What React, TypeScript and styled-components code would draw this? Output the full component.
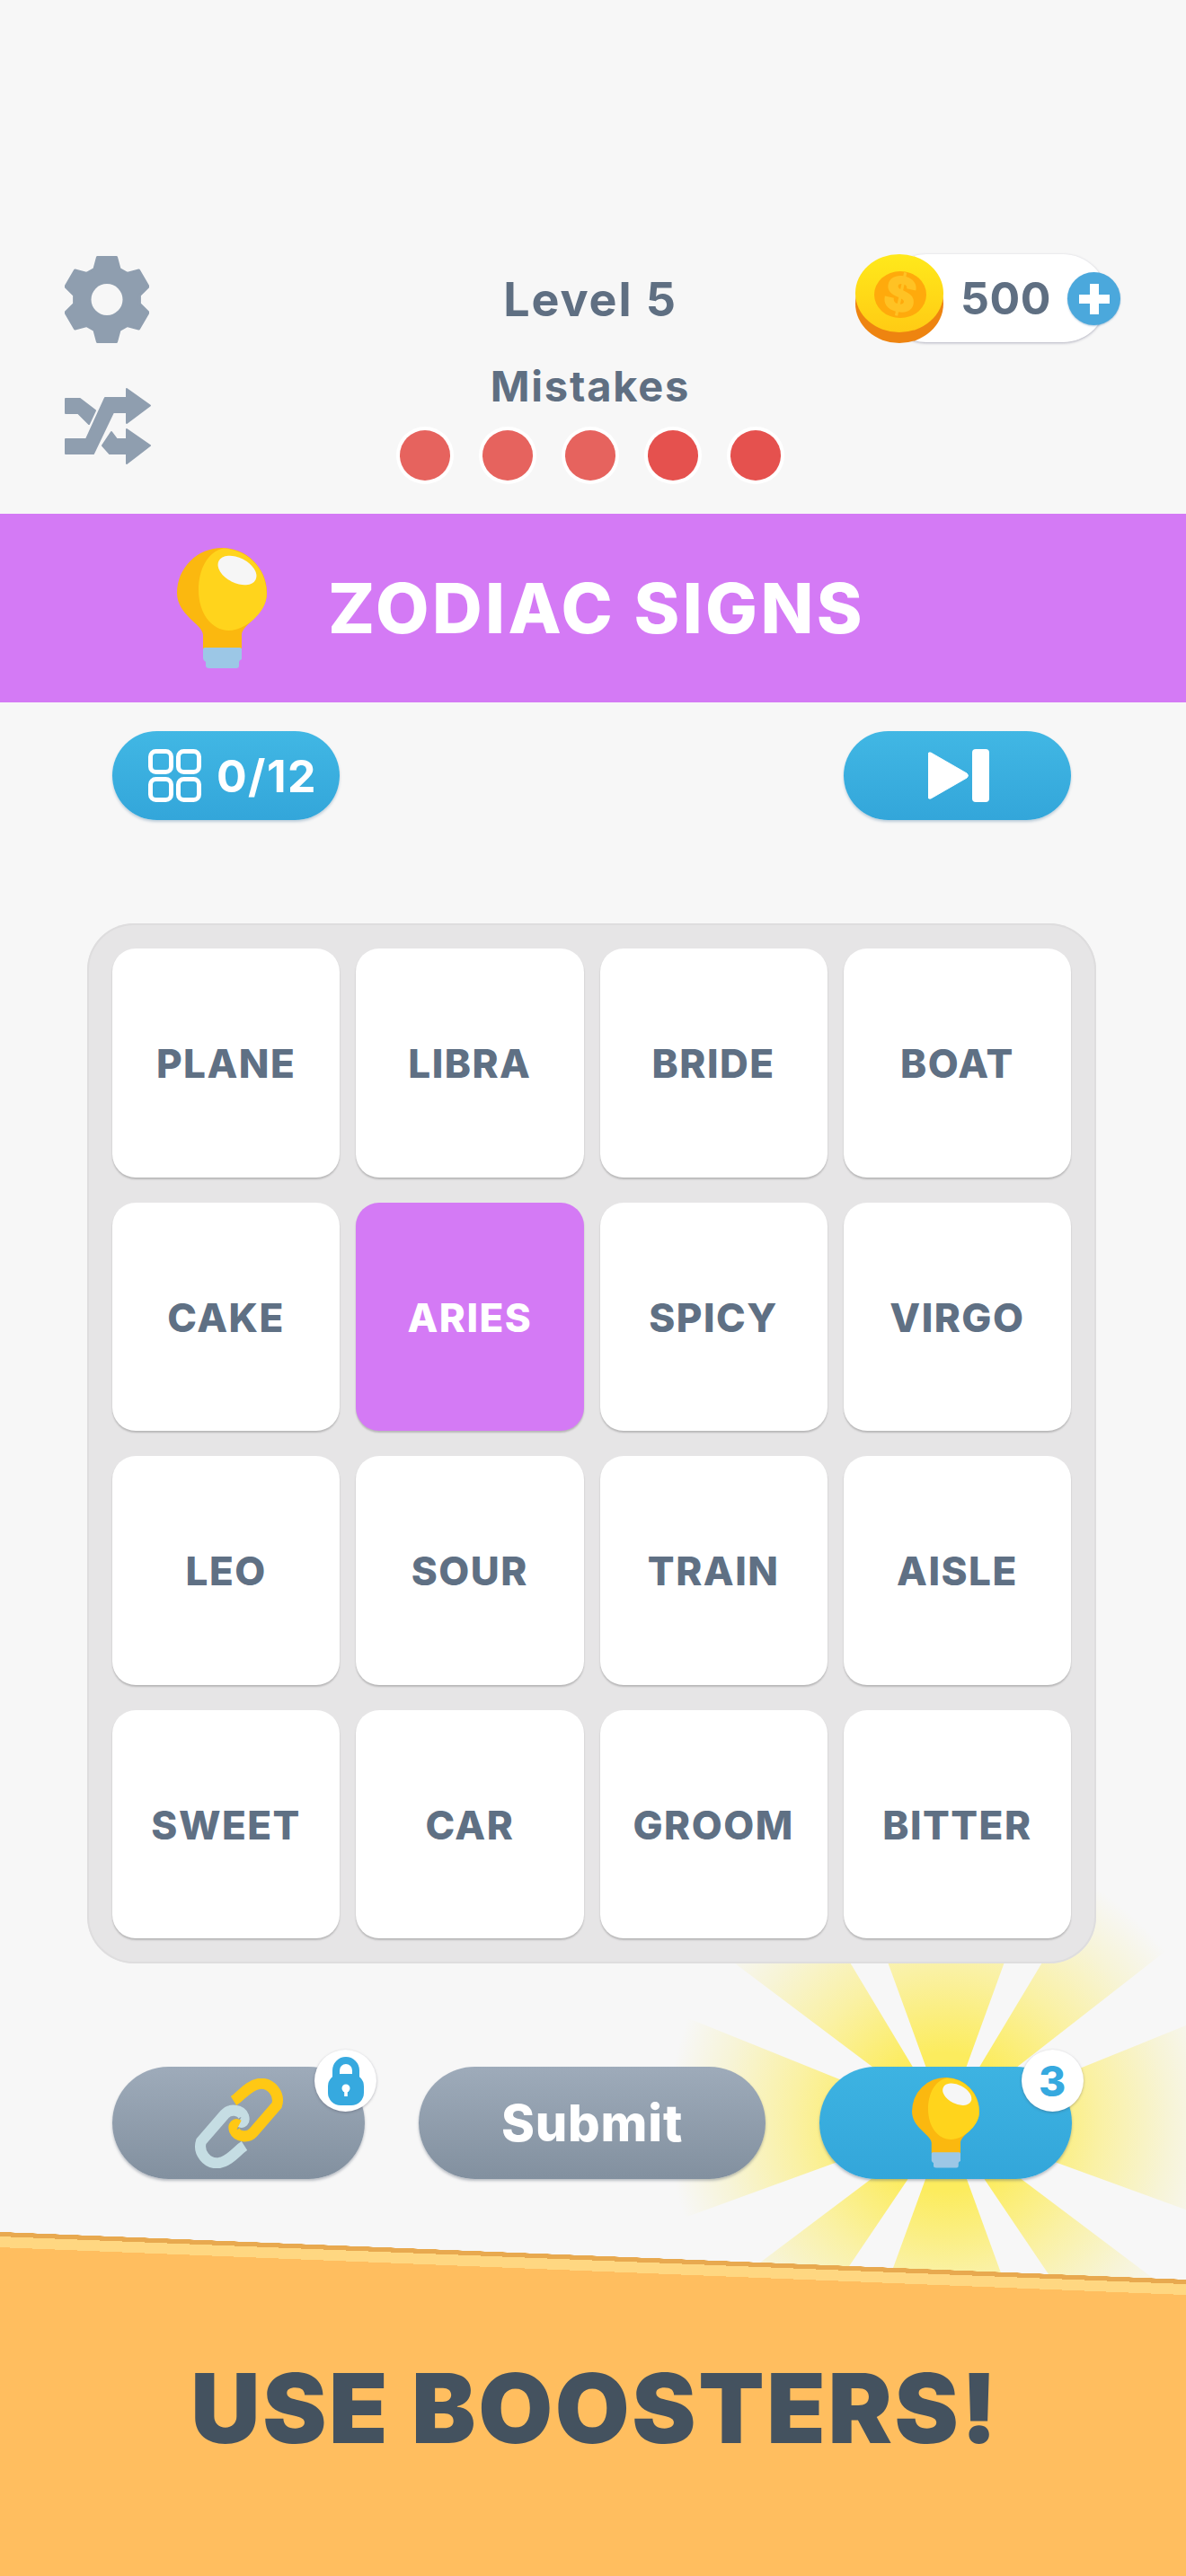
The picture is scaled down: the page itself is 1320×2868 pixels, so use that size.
import React from 'react';
import styled, { createGlobalStyle } from 'styled-components';

const GlobalStyle = createGlobalStyle`
  html, body {
    margin: 0;
    padding: 0;
    background: #F7F7F7;
  }
`;

const Page = styled.div`
  position: relative;
  width: 1320px;
  height: 2868px;
  overflow: hidden;
  background: #F7F7F7;
  font-family: Inter, "Noto Sans", sans-serif;
`;

const Header = styled.header`
  display: grid;
  grid-template-columns: 300px 570px auto;
  height: 572px;
  box-sizing: border-box;
  padding: 283px 0 0 72px;
`;

const ToolColumn = styled.div`
  display: flex;
  flex-direction: column;
  gap: 50px;
  padding-top: 2px;
`;

const StatusColumn = styled.div`
  display: flex;
  flex-direction: column;
  align-items: center;
`;

const LevelText = styled.div`
  margin-top: 19px;
  font-size: 52px;
  line-height: 64px;
  font-weight: 700;
  letter-spacing: 1.9px;
  color: #5F6F82;
`;

const MistakesText = styled.div`
  margin-top: 36px;
  font-size: 47px;
  line-height: 56px;
  font-weight: 700;
  letter-spacing: 1.8px;
  color: #5F6F82;
`;

const Dots = styled.div`
  display: flex;
  gap: 36px;
  margin-top: 21px;
`;

const Dot = styled.div<{ $strong?: boolean }>`
  width: 56px;
  height: 56px;
  border-radius: 50%;
  background: ${(p) => (p.$strong ? '#E5514E' : '#E6635E')};
  box-shadow: 0 0 0 4px #FFFFFF;
`;

const CoinBox = styled.div`
  position: relative;
  margin-left: 10px;
  width: 295px;
  height: 99px;
`;

const CoinPill = styled.div`
  display: flex;
  align-items: center;
  height: 98px;
  margin-left: 30px;
  width: 250px;
  box-sizing: border-box;
  padding-left: 87px;
  border-radius: 49px;
  background: #FFFFFF;
  box-shadow: 0 1px 3px rgba(90, 90, 120, 0.45);
  font-size: 50px;
  font-weight: 700;
  letter-spacing: 0.6px;
  color: #5F6F82;
`;

const CoinIcon = styled.svg`
  position: absolute;
  left: 0;
  top: 0;
`;

const PlusButton = styled.div`
  position: absolute;
  left: 236px;
  top: 20px;
  width: 59px;
  height: 59px;
  border-radius: 50%;
  background: #4BA8DC;
  display: flex;
  align-items: center;
  justify-content: center;
  box-shadow: 0 1px 2px rgba(60, 120, 170, 0.4);
`;

const Banner = styled.section`
  display: flex;
  align-items: center;
  gap: 68px;
  height: 210px;
  box-sizing: border-box;
  padding-left: 197px;
  background: #D47AF5;
`;

const BannerTitle = styled.h1`
  margin: 0;
  font-size: 77px;
  font-weight: 800;
  letter-spacing: 3.4px;
  color: #FFFFFF;
`;

const PillRow = styled.div`
  display: flex;
  justify-content: space-between;
  padding: 32px 128px 0 125px;
`;

const BluePill = styled.div<{ $shift?: number }>`
  display: flex;
  align-items: center;
  justify-content: center;
  gap: 17px;
  width: 253px;
  height: 99px;
  box-sizing: border-box;
  padding-left: ${(p) => p.$shift ?? 0}px;
  border-radius: 50px;
  background: linear-gradient(#41B7E4, #33A6DA);
  box-shadow: 0 2px 3px rgba(60, 110, 150, 0.3);
`;

const CounterText = styled.span`
  font-size: 50px;
  font-weight: 700;
  letter-spacing: 1.5px;
  color: #FFFFFF;
`;

const Board = styled.main`
  position: relative;
  z-index: 2;
  display: grid;
  grid-template-columns: repeat(4, 1fr);
  grid-template-rows: repeat(4, 1fr);
  column-gap: 18px;
  row-gap: 28px;
  width: 1123px;
  height: 1158px;
  box-sizing: border-box;
  margin: 115px 0 0 97px;
  padding: 28px;
  border-radius: 52px;
  background: #E6E5E6;
  box-shadow: inset 0 0 0 2px #DEDDDE;
`;

const Tile = styled.div<{ $selected?: boolean }>`
  display: flex;
  align-items: center;
  justify-content: center;
  box-sizing: border-box;
  padding-top: 2px;
  border-radius: 26px;
  background: ${(p) => (p.$selected ? '#D47AF5' : '#FFFFFF')};
  box-shadow: 0 2px 2px rgba(0, 0, 0, 0.2);
  font-size: 44px;
  font-weight: 800;
  letter-spacing: 1.5px;
  color: ${(p) => (p.$selected ? '#FFFFFF' : '#5F7084')};
`;

const ActionRow = styled.div`
  position: relative;
  display: flex;
  gap: 60px;
  margin-top: 115px;
  padding-left: 125px;
`;

const ActionButton = styled.button<{ $width: number; $blue?: boolean }>`
  position: relative;
  z-index: 1;
  display: flex;
  align-items: center;
  justify-content: center;
  width: ${(p) => p.$width}px;
  height: 125px;
  padding: 0;
  border: none;
  border-radius: 63px;
  background: ${(p) => (p.$blue ? 'linear-gradient(#3DB3E2, #33A6DA)' : 'linear-gradient(#9EABBA, #82909F)')};
  box-shadow: 0 2px 3px rgba(70, 80, 100, 0.35);
  font-family: Inter, sans-serif;
  font-size: 56px;
  font-weight: 800;
  letter-spacing: 0.8px;
  color: #FFFFFF;
`;

const CornerBadge = styled.div`
  position: absolute;
  right: -13px;
  top: -19px;
  width: 69px;
  height: 69px;
  border-radius: 50%;
  background: #FFFFFF;
  box-shadow: 0 1px 3px rgba(60, 60, 80, 0.35);
  display: flex;
  align-items: center;
  justify-content: center;
  font-family: Inter, sans-serif;
  font-size: 46px;
  font-weight: 800;
  color: #36A9DF;
`;

const RaysArt = styled.svg`
  position: absolute;
  left: 713px;
  top: -278px;
  z-index: 0;
`;

const Footer = styled.footer`
  position: relative;
  z-index: 2;
  height: 383px;
  margin-top: 59px;
  box-sizing: border-box;
  padding: 131px 0 0 5px;
  text-align: center;
  background: linear-gradient(
    182.3deg,
    transparent 52.8px,
    #E8A94F 53px,
    #E8A94F 58px,
    #FFD781 58px,
    #FFD781 70px,
    #FFBE5F 70px
  );
`;

const FooterTitle = styled.h2`
  margin: 0;
  font-size: 107px;
  line-height: 130px;
  font-weight: 900;
  letter-spacing: 2.6px;
  color: #44525F;
`;

const Bulb = ({ width }: { width: number }) => (
  <svg width={width} height={(width * 134) / 100} viewBox="0 0 100 134">
    <path d="M29 97C29 85 0 75 0 50A50 50 0 0 1 100 50C100 75 72 85 72 97V112H29Z" fill="#FBB80F" />
    <path d="M52 .5C34 4 24 24 24 47C24 72 38 92 58 92C76 92 98 72 99.5 55A50 50 0 0 0 52 .5Z" fill="#FFD41C" />
    <ellipse cx="67" cy="25" rx="23" ry="14" transform="rotate(27 67 25)" fill="#F6F6F6" />
    <path d="M31 111H70Q72 111 72 113V124Q69 125 69 127V131Q69 134 66 134H36Q32 134 32 131V127Q29 125 29 123V113Q29 111 31 111Z" fill="#9CC7E6" />
  </svg>
);

// six teeth, small round join on the corners
const gearPath = () => {
  const pts: string[] = [];
  for (let k = 0; k < 6; k++) {
    const a = (k * Math.PI) / 3;
    const at = (r: number, w: number) =>
      `${(47 + r * Math.sin(a) + w * Math.cos(a)).toFixed(1)} ${(48.5 - r * Math.cos(a) + w * Math.sin(a)).toFixed(1)}`;
    pts.push(at(34, -14), at(47, -10.5), at(47, 10.5), at(34, 14));
  }
  return `M${pts.join('L')}Z`;
};

const GearIcon = () => (
  <svg width="94" height="97" viewBox="0 0 94 97">
    <path d={gearPath()} fill="#8F9EAF" stroke="#8F9EAF" strokeWidth="3" strokeLinejoin="round" />
    <circle cx="47" cy="48.5" r="17.5" fill="#F7F7F7" />
  </svg>
);

const ShuffleIcon = () => (
  <svg width="97" height="85" viewBox="0 0 97 85">
    <g fill="#8F9EAF" stroke="#8F9EAF" strokeWidth="2" strokeLinejoin="round">
      <path d="M1 57H24L45 11H69V1L95 19.5L69 39V27H54L32 73H1Z" />
      <path d="M1 12H17L34 25L27 40L15 28H1Z" />
      <path d="M42 64L52 49L58 57H69V46L95 64L69 84V73H50Z" />
    </g>
  </svg>
);

const Coin = () => (
  <CoinIcon width="98" height="99" viewBox="0 0 98 99">
    <defs>
      <linearGradient id="coinFace" x1="0" y1="0" x2="0" y2="1">
        <stop offset="0" stopColor="#FFE91B" />
        <stop offset="1" stopColor="#FFCB14" />
      </linearGradient>
    </defs>
    <ellipse cx="49" cy="55" rx="49" ry="44" fill="#EE8410" />
    <ellipse cx="49" cy="43.5" rx="49" ry="43.5" fill="url(#coinFace)" />
    <ellipse cx="50" cy="45" rx="29" ry="26" fill="#FFAA0C" />
    <text x="50" y="64" textAnchor="middle" fontFamily="Inter, sans-serif" fontWeight="900" fontSize="54" fill="#FFC224" transform="rotate(12 50 45)">$</text>
  </CoinIcon>
);

const PlusIcon = () => (
  <svg width="34" height="34" viewBox="0 0 34 34">
    <path d="M12 0H22V12H34V22H22V34H12V22H0V12H12Z" fill="#FFFFFF" />
  </svg>
);

const GridIcon = () => (
  <svg width="59" height="59" viewBox="0 0 59 59" fill="none" stroke="#FFFFFF" strokeWidth="5">
    <rect x="2.5" y="2.5" width="23" height="23" rx="6" />
    <rect x="33.5" y="2.5" width="23" height="23" rx="6" />
    <rect x="2.5" y="33.5" width="23" height="23" rx="6" />
    <rect x="33.5" y="33.5" width="23" height="23" rx="6" />
  </svg>
);

const SkipIcon = () => (
  <svg width="68" height="59" viewBox="0 0 68 59">
    <path d="M3 4L43 27Q46 29.5 43 32L3 55Q0 56 0 53V6Q0 3 3 4Z" fill="#FFFFFF" stroke="#FFFFFF" strokeWidth="1" />
    <rect x="49" y="0" width="19" height="59" rx="4" fill="#FFFFFF" />
  </svg>
);

const LinkIcon = () => (
  <svg width="100" height="100" viewBox="0 0 100 100" fill="none" strokeWidth="12" strokeLinecap="butt">
    <path d="M56 75C48 80 40 92 28 94C14 96 4 82 8 70L34 40C40 33 52 35 55 42C57 48 54 50 50 48" stroke="#C5DDE3" />
    <path d="M44 25C52 20 60 8 72 6C86 4 96 18 92 30L66 60C60 67 48 65 45 58C43 52 46 50 50 52" stroke="#FFC814" />
  </svg>
);

const LockIcon = () => (
  <svg width="40" height="54" viewBox="0 0 40 54">
    <path d="M9 26V15A11 11 0 0 1 31 15V26" fill="none" stroke="#36A9DF" strokeWidth="8" />
    <rect x="0" y="19" width="40" height="35" rx="14" fill="#36A9DF" />
    <circle cx="20" cy="35" r="4.5" fill="#FFFFFF" />
    <rect x="18.2" y="35" width="3.6" height="9" fill="#FFFFFF" />
  </svg>
);

// degrees clockwise from straight up, both edges of each ray
const rayAngles: [number, number][] = [
  [-20, 20], [31, 52], [68, 110], [127, 146], [160, 200], [214, 233], [250, 292], [307, 329],
];

const rayPoint = (deg: number) => {
  const r = (deg * Math.PI) / 180;
  return `${(340 + 340 * Math.sin(r)).toFixed(1)} ${(340 - 340 * Math.cos(r)).toFixed(1)}`;
};

const Rays = () => (
  <RaysArt width="680" height="680" viewBox="0 0 680 680">
    <defs>
      <radialGradient id="rayFade" gradientUnits="userSpaceOnUse" cx="340" cy="340" r="310">
        <stop offset="0.25" stopColor="#FCEC5E" />
        <stop offset="0.55" stopColor="#FAF1A4" />
        <stop offset="0.8" stopColor="#F7F4D6" />
        <stop offset="1" stopColor="#F7F7F7" />
      </radialGradient>
    </defs>
    {rayAngles.map(([a, b]) => (
      <polygon key={a} points={`340 340 ${rayPoint(a)} ${rayPoint(b)}`} fill="url(#rayFade)" />
    ))}
  </RaysArt>
);

const words = [
  'PLANE', 'LIBRA', 'BRIDE', 'BOAT',
  'CAKE', 'ARIES', 'SPICY', 'VIRGO',
  'LEO', 'SOUR', 'TRAIN', 'AISLE',
  'SWEET', 'CAR', 'GROOM', 'BITTER',
];

export default function App() {
  return (
    <Page>
      <GlobalStyle />
      <Header>
        <ToolColumn>
          <GearIcon />
          <ShuffleIcon />
        </ToolColumn>
        <StatusColumn>
          <LevelText>Level 5</LevelText>
          <MistakesText>Mistakes</MistakesText>
          <Dots>
            {[0, 1, 2, 3, 4].map((i) => (
              <Dot key={i} $strong={i > 2} />
            ))}
          </Dots>
        </StatusColumn>
        <CoinBox>
          <CoinPill>500</CoinPill>
          <Coin />
          <PlusButton>
            <PlusIcon />
          </PlusButton>
        </CoinBox>
      </Header>
      <Banner>
        <Bulb width={100} />
        <BannerTitle>ZODIAC SIGNS</BannerTitle>
      </Banner>
      <PillRow>
        <BluePill $shift={15}>
          <GridIcon />
          <CounterText>0/12</CounterText>
        </BluePill>
        <BluePill $shift={3}>
          <SkipIcon />
        </BluePill>
      </PillRow>
      <Board>
        {words.map((w) => (
          <Tile key={w} $selected={w === 'ARIES'}>
            {w}
          </Tile>
        ))}
      </Board>
      <ActionRow>
        <Rays />
        <ActionButton $width={281}>
          <LinkIcon />
          <CornerBadge>
            <LockIcon />
          </CornerBadge>
        </ActionButton>
        <ActionButton $width={386}>Submit</ActionButton>
        <ActionButton $width={281} $blue>
          <Bulb width={75} />
          <CornerBadge>3</CornerBadge>
        </ActionButton>
      </ActionRow>
      <Footer>
        <FooterTitle>USE BOOSTERS!</FooterTitle>
      </Footer>
    </Page>
  );
}
